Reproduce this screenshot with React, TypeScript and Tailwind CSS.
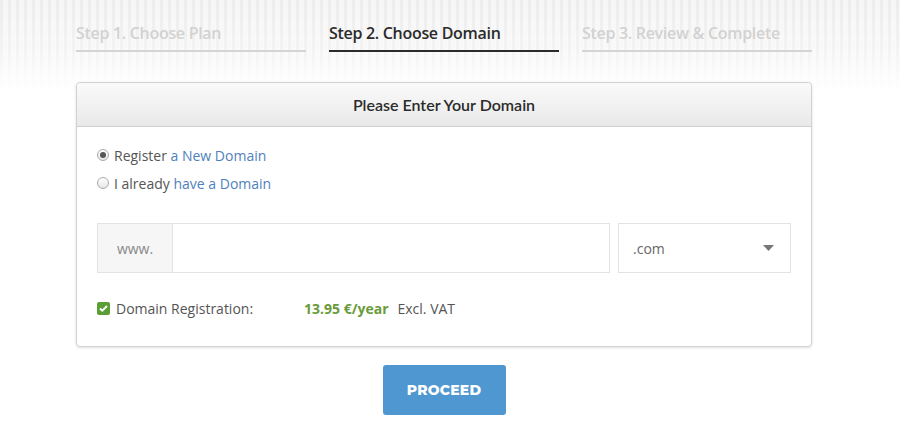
import { useState } from "react";

const steps = [
  { label: "Step 1. Choose Plan", active: false },
  { label: "Step 2. Choose Domain", active: true },
  { label: "Step 3. Review & Complete", active: false },
];

export default function App() {
  const [mode, setMode] = useState<"new" | "have">("new");

  return (
    <div className="min-h-[431px] bg-white bg-[linear-gradient(to_bottom,rgba(255,255,255,0)_0px,rgba(255,255,255,0.4)_50px,#fff_92px),repeating-linear-gradient(90deg,#ececec_0px,#ececec_3px,#f6f6f6_3px,#f6f6f6_8px)] bg-no-repeat bg-[length:100%_100px] font-['Open_Sans',sans-serif]">
      <div className="ml-[76px] w-[736px] pt-[22px]">
        {/* steps */}
        <div className="flex gap-[23px]">
          {steps.map((s) => (
            <div
              key={s.label}
              className={
                "w-[230px] border-b-2 pb-[6px] text-[16px] font-semibold leading-[22px] tracking-[-0.3px] " +
                (s.active ? "border-[#2b2b2b] text-[#2b2b2b]" : "border-[#d4d4d4] text-[#d2d2d2]")
              }
            >
              {s.label}
            </div>
          ))}
        </div>

        {/* card */}
        <div className="mt-[30px] rounded-[4px] border border-[#d2d2d2] bg-white shadow-[0_1px_3px_rgba(0,0,0,0.12)]">
          <div className="flex h-[44px] items-center justify-center rounded-t-[4px] border-b border-[#cfcfcf] bg-[linear-gradient(to_bottom,#fafafa,#e9e9e9)] font-['Lato',sans-serif] text-[16px] font-semibold text-[#2b2b2b]">
            Please Enter Your Domain
          </div>

          <div className="px-[20px] pb-[28px] pt-[18px] text-[14px] text-[#555]">
            <label className="flex h-[20px] items-center gap-[5px]" onClick={() => setMode("new")}>
              <Radio on={mode === "new"} />
              <span>
                Register <span className="text-[#4f7fbc]">a New Domain</span>
              </span>
            </label>
            <label className="mt-[8px] flex h-[20px] items-center gap-[5px]" onClick={() => setMode("have")}>
              <Radio on={mode === "have"} />
              <span>
                I already <span className="text-[#4f7fbc]">have a Domain</span>
              </span>
            </label>

            <div className="mt-[30px] flex gap-[8px]">
              <div className="flex h-[50px] flex-1 border border-[#e3e3e3]">
                <div className="flex w-[75px] items-center justify-center border-r border-[#e3e3e3] bg-[#f6f6f6] text-[#888]">
                  www.
                </div>
                <input className="flex-1 px-3 outline-none" />
              </div>
              <div className="flex h-[50px] w-[173px] items-center justify-between border border-[#e3e3e3] pl-[14px] pr-[16px] text-[#666]">
                <span>.com</span>
                <svg width="11" height="6" viewBox="0 0 11 6">
                  <path d="M0 0h11L5.5 6z" fill="#777" />
                </svg>
              </div>
            </div>

            <div className="mt-[25px] flex h-[20px] items-center">
              <span className="flex h-[13px] w-[13px] items-center justify-center rounded-[2px] bg-[#5a9e35]">
                <svg width="9" height="7" viewBox="0 0 9 7">
                  <path d="M1 3.5l2.3 2.2L8 1" stroke="#fff" strokeWidth="1.8" fill="none" />
                </svg>
              </span>
              <span className="ml-[6px] w-[188px]">Domain Registration:</span>
              <span className="font-bold text-[#6a9b3a]">13.95 €/year</span>
              <span className="ml-[9px]">Excl. VAT</span>
            </div>
          </div>
        </div>

        <div className="mt-[18px] flex justify-center">
          <button className="h-[50px] w-[123px] rounded-[3px] bg-[#4f97d1] font-['Montserrat','Open_Sans',sans-serif] text-[14px] font-extrabold tracking-[0.2px] text-white">
            PROCEED
          </button>
        </div>
      </div>
    </div>
  );
}

function Radio({ on }: { on: boolean }) {
  return (
    <span className="flex h-[12px] w-[12px] items-center justify-center rounded-full border border-[#aaa] bg-[linear-gradient(to_bottom,#fff,#e6e6e6)]">
      {on && <span className="h-[6px] w-[6px] rounded-full bg-[#555]" />}
    </span>
  );
}
